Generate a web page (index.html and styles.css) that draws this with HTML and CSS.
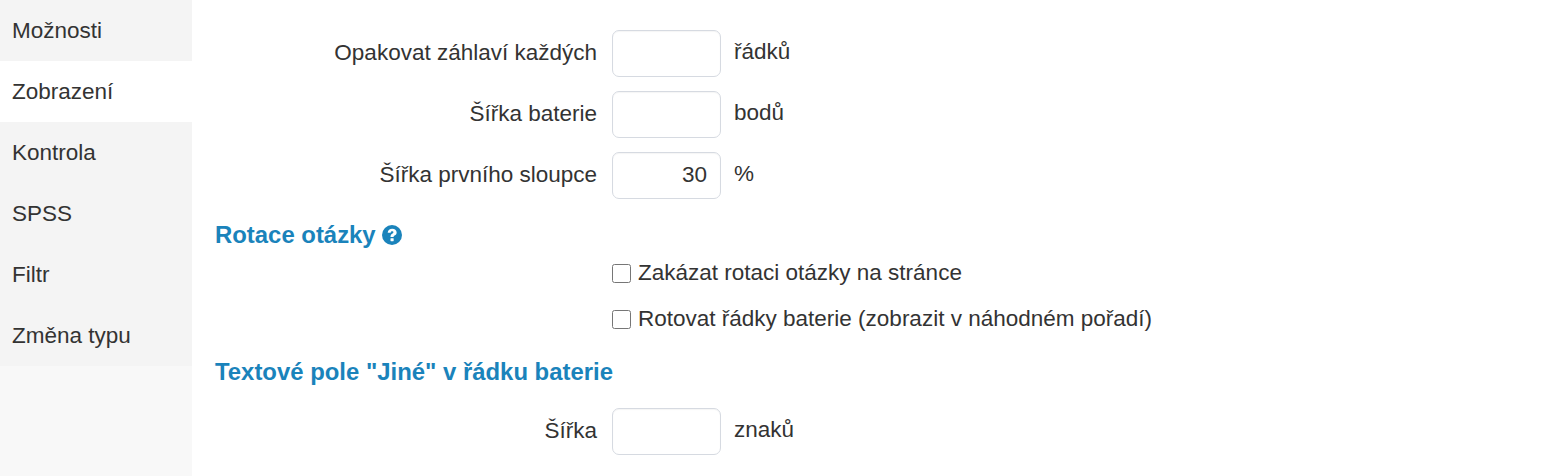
FILE: index.html
```html
<!DOCTYPE html>
<html lang="cs">
<head>
    <meta charset="UTF-8">
    <meta name="viewport" content="width=device-width, initial-scale=1.0">
    <title>Možnosti otázky</title>
    <link rel="stylesheet" href="styles.css">
</head>
<body>
    <div class="layout">
        <ul class="tabs">
            <li><a href="#">Možnosti</a></li>
            <li class="active"><a href="#">Zobrazení</a></li>
            <li><a href="#">Kontrola</a></li>
            <li><a href="#">SPSS</a></li>
            <li><a href="#">Filtr</a></li>
            <li><a href="#">Změna typu</a></li>
        </ul>

        <div class="content">
            <div class="form-row">
                <label class="form-label">Opakovat záhlaví každých</label>
                <input class="form-input" type="text">
                <span class="form-unit">řádků</span>
            </div>
            <div class="form-row">
                <label class="form-label">Šířka baterie</label>
                <input class="form-input" type="text">
                <span class="form-unit">bodů</span>
            </div>
            <div class="form-row">
                <label class="form-label">Šířka prvního sloupce</label>
                <input class="form-input" type="text" value="30">
                <span class="form-unit">%</span>
            </div>

            <h4 class="section-title">Rotace otázky
                <svg class="help-icon" viewBox="0 0 24 24" aria-hidden="true">
                    <circle cx="12" cy="12" r="12" fill="#1a83bb"/>
                    <path d="M6.800 9.200C7.100 6.200 9.300 4.400 12.300 4.400c3 0 5.300 1.900 5.300 4.500 0 1.900-1.100 2.900-2.400 3.700-1 .6-1.300 1-1.300 1.900H10.200c0-2.200.6-3.200 2-4.100 1-.6 1.500-1 1.500-1.600 0-.7-.6-1.200-1.500-1.200-1 0-1.600.5-1.800 1.700z" fill="#fff"/>
                    <rect x="10.200" y="15.800" width="3.800" height="3.600" rx=".5" fill="#fff"/>
                </svg>
            </h4>
            <div class="check-group">
                <div class="check-row">
                    <input class="form-check" type="checkbox" id="rot1">
                    <label for="rot1">Zakázat rotaci otázky na stránce</label>
                </div>
                <div class="check-row">
                    <input class="form-check" type="checkbox" id="rot2">
                    <label for="rot2">Rotovat řádky baterie (zobrazit v náhodném pořadí)</label>
                </div>
            </div>

            <h4 class="section-title section-title-other">Textové pole "Jiné" v řádku baterie</h4>
            <div class="form-row">
                <label class="form-label">Šířka</label>
                <input class="form-input" type="text">
                <span class="form-unit">znaků</span>
            </div>
        </div>
    </div>
</body>
</html>
```

FILE: styles.css
```css
html, body {
    margin: 0;
    padding: 0;
    height: 100%;
    overflow: hidden;
}
body {
    font-family: "Liberation Sans", Arial, sans-serif;
    font-size: 22.5px;
    color: #333;
    background: #fff;
}
.layout {
    display: flex;
    height: 476px;
}
.tabs {
    flex: 0 0 192px;
    margin: 0;
    padding: 0;
    list-style: none;
    background: #f8f8f8;
}
.tabs li {
    height: 61px;
    background: #f4f4f4;
}
.tabs li.active {
    background: #fff;
}
.tabs a {
    display: block;
    padding: 0 12px;
    line-height: 61px;
    color: #333;
    text-decoration: none;
}
.content {
    flex: 1;
    padding: 30px 23px 0;
}
.form-row {
    display: flex;
    align-items: center;
    height: 47px;
    margin-bottom: 14px;
}
.form-label {
    flex: 0 0 382px;
    padding-bottom: 2px;
    text-align: right;
}
.form-input {
    box-sizing: border-box;
    width: 109px;
    height: 47px;
    margin-left: 15px;
    padding: 0 13px 2px;
    border: 1px solid #d6dae1;
    border-radius: 7px;
    box-shadow: inset 0 1px 1px rgba(0, 0, 0, .04);
    font-family: inherit;
    font-size: 22.5px;
    color: #333;
    text-align: right;
}
.form-unit {
    margin-left: 13px;
    padding-bottom: 4px;
}
.section-title {
    margin: 0;
    padding-top: 8px;
    font-size: 23.9px;
    line-height: 27px;
    font-weight: bold;
    color: #1a83bb;
}
.help-icon {
    width: 20px;
    height: 20px;
    vertical-align: -2px;
}
.check-group {
    padding-top: 2px;
}
.check-row {
    display: flex;
    align-items: center;
    height: 46px;
    margin-left: 397px;
}
.form-check {
    width: 19px;
    height: 19px;
    margin: 0 7px 0 0;
}
.section-title-other {
    padding-top: 16px;
    margin-bottom: 23px;
}
```
